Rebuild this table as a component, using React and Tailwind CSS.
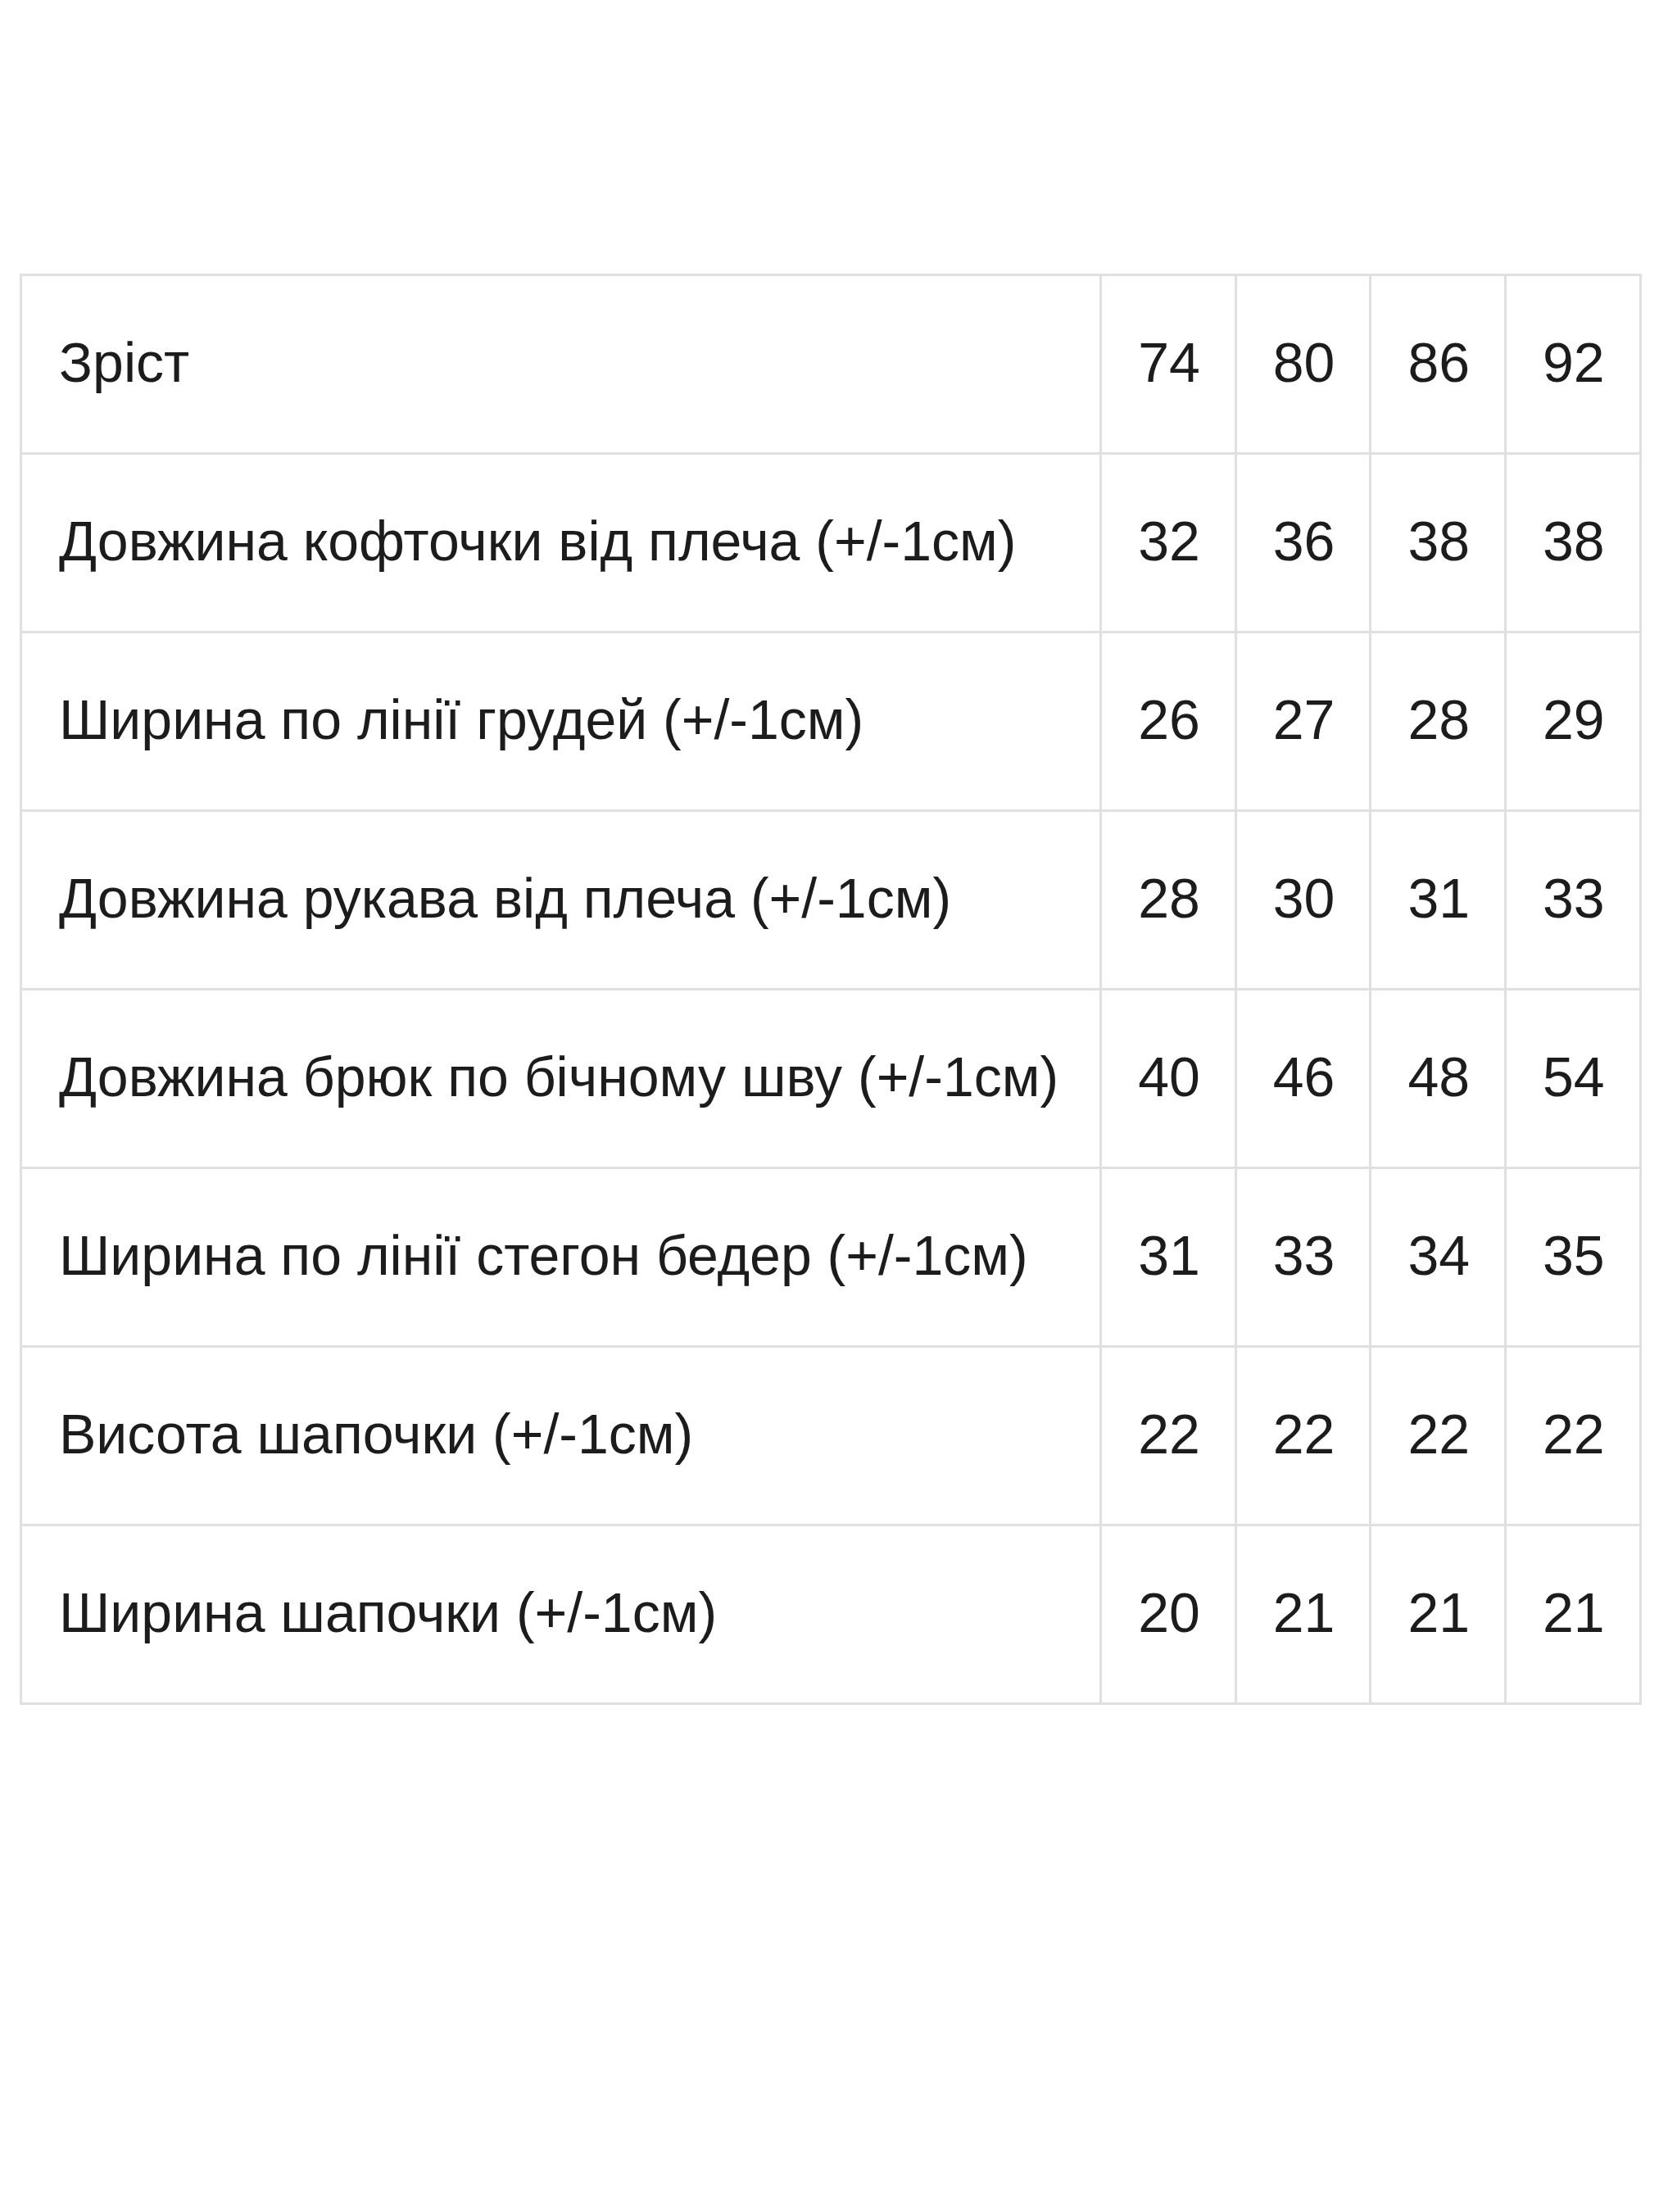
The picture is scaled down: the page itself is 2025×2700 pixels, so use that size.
import React from "react";

const rows = [
  ["Зріст", "74", "80", "86", "92"],
  ["Довжина кофточки від плеча (+/-1см)", "32", "36", "38", "38"],
  ["Ширина по лінії грудей (+/-1см)", "26", "27", "28", "29"],
  ["Довжина рукава від плеча (+/-1см)", "28", "30", "31", "33"],
  ["Довжина брюк по бічному шву (+/-1см)", "40", "46", "48", "54"],
  ["Ширина по лінії стегон бедер (+/-1см)", "31", "33", "34", "35"],
  ["Висота шапочки (+/-1см)", "22", "22", "22", "22"],
  ["Ширина шапочки (+/-1см)", "20", "21", "21", "21"],
];

export default function App() {
  return (
    <div
      className="w-[2025px] h-[2700px] bg-white pt-[334px] pl-[24px]"
      style={{ fontFamily: '"Liberation Sans", Arial, sans-serif' }}
    >
      <table className="border-collapse text-[68px] text-[#1c1c1c] leading-none">
        <tbody>
          {rows.map((r, i) => (
            <tr key={i}>
              {r.map((c, j) => (
                <td
                  key={j}
                  className={
                    j === 0
                      ? "border-[3px] border-[#e0e0e0] h-[218px] pl-[45px] pr-[50px] pb-[6px] align-middle whitespace-nowrap text-left"
                      : "border-[3px] border-[#e0e0e0] h-[218px] pl-[44px] pr-[42px] pb-[6px] align-middle whitespace-nowrap text-left"
                  }
                >
                  {c}
                </td>
              ))}
            </tr>
          ))}
        </tbody>
      </table>
    </div>
  );
}
